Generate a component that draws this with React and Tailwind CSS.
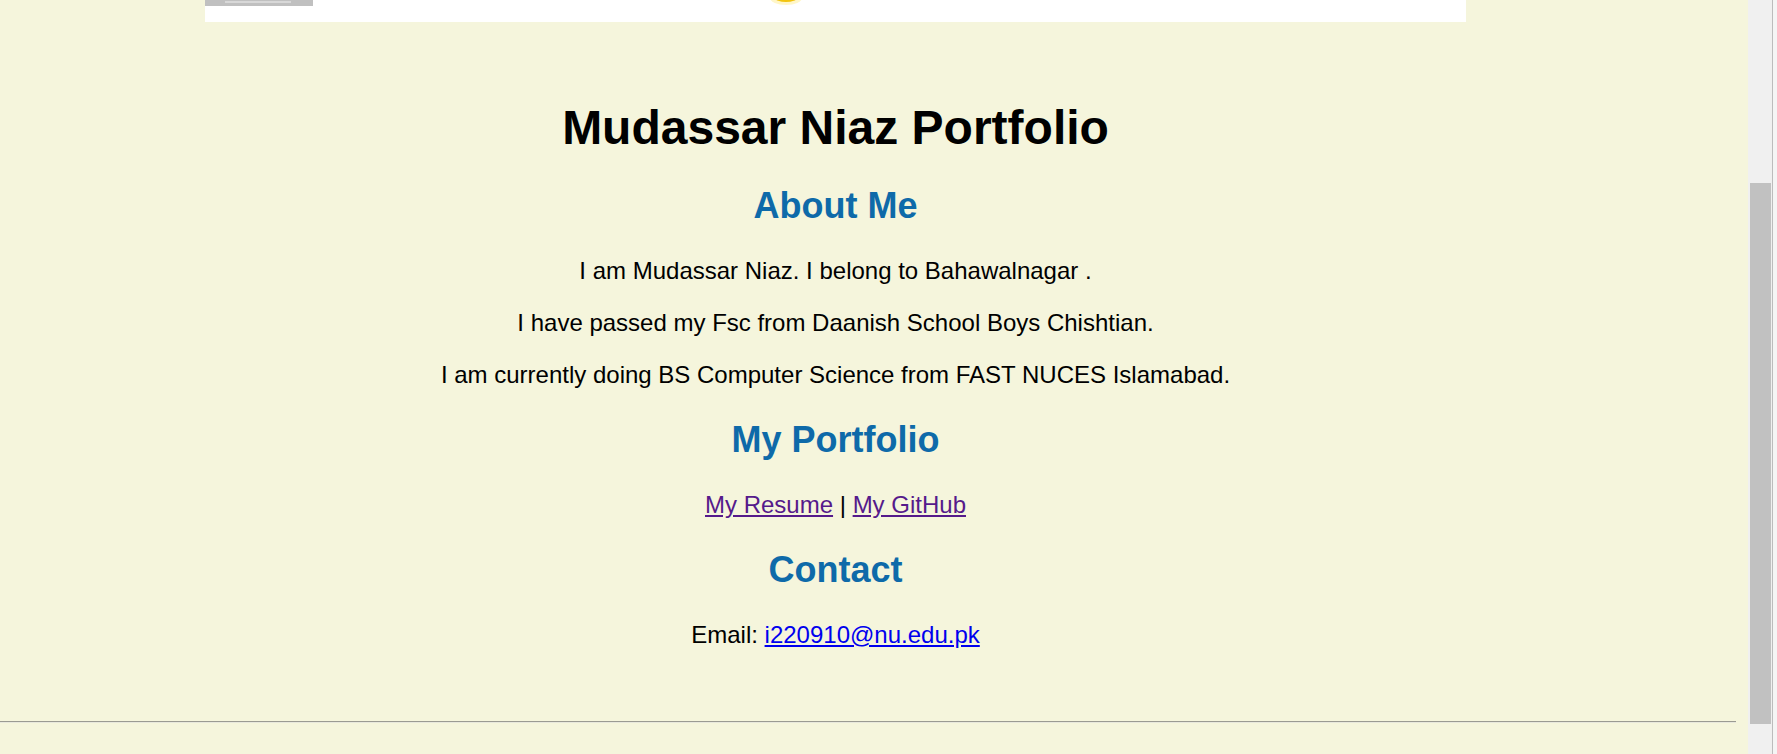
export default function App() {
  return (
    <div className="flex h-[754px] w-[1777px] overflow-hidden bg-[#f5f5dc] font-['Liberation_Sans',Arial,sans-serif] text-black">
      <div className="flex w-[1748px] flex-col">
        <div className="ml-[205px] w-[1261px] text-center">
          <svg width="1261" height="22" viewBox="0 0 1261 22" className="block">
            <rect x="0" y="0" width="1261" height="22" fill="#ffffff" />
            <rect x="0" y="0" width="108" height="6" fill="#c0c0c0" />
            <rect x="20" y="1" width="66" height="2" fill="#d8d8d8" />
            <ellipse cx="581" cy="-2" rx="16" ry="7" fill="#fff6c8" />
            <ellipse cx="581" cy="-2" rx="11" ry="4" fill="#f2c40f" />
          </svg>
          <h1 className="mb-[30px] mt-[78px] text-[48px] font-bold leading-[normal]">Mudassar Niaz Portfolio</h1>
          <h2 className="my-[30px] text-[36px] font-bold leading-[normal] text-[#0e6aa9]">About Me</h2>
          <p className="my-[24px] text-[24px] leading-[normal]">I am Mudassar Niaz. I belong to Bahawalnagar .</p>
          <p className="my-[24px] text-[24px] leading-[normal]">I have passed my Fsc from Daanish School Boys Chishtian.</p>
          <p className="my-[24px] text-[24px] leading-[normal]">I am currently doing BS Computer Science from FAST NUCES Islamabad.</p>
          <h2 className="my-[30px] text-[36px] font-bold leading-[normal] text-[#0e6aa9]">My Portfolio</h2>
          <p className="my-[24px] text-[24px] leading-[normal]">
            <a href="#" className="text-[#551a8b] underline">My Resume</a> | <a href="#" className="text-[#551a8b] underline">My GitHub</a>
          </p>
          <h2 className="my-[30px] text-[36px] font-bold leading-[normal] text-[#0e6aa9]">Contact</h2>
          <p className="mb-0 mt-[24px] text-[24px] leading-[normal]">
            Email: <a href="#" className="text-[#0000ee] underline">i220910@nu.edu.pk</a>
          </p>
        </div>
        <div className="mt-[72px] h-[2px] w-[1736px] border-t border-b border-t-[#9a9a92] border-b-[#e8e8dc]" />
      </div>
      <div className="flex h-full w-[29px]">
        <div className="h-full w-[24px] bg-[#f0f0f0] pt-[183px]">
          <div className="ml-[2px] h-[541px] w-[21px] bg-[#c1c1c1]" />
        </div>
        <div className="h-full w-[1px] bg-[#bcbcbc]" />
        <div className="h-full w-[4px] bg-[#f5f5f5]" />
      </div>
    </div>
  );
}
